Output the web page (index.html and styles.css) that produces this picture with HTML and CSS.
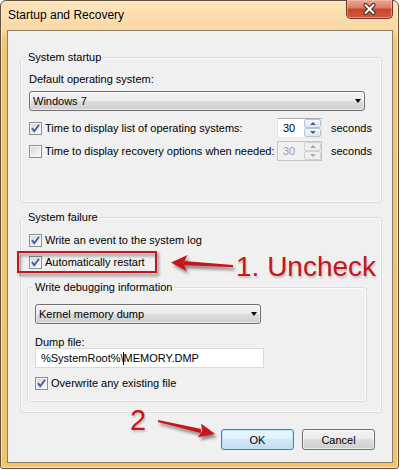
FILE: index.html
```html
<!DOCTYPE html>
<html lang="en">
<head>
    <meta charset="UTF-8">
    <title>Startup and Recovery</title>
    <link rel="stylesheet" href="styles.css">
</head>
<body>
    <div class="window">
        <div class="titlebar">
            <span class="title">Startup and Recovery</span>
            <button class="close" aria-label="Close">
                <svg width="13" height="12" viewBox="0 0 13 12">
                    <path d="M2.5 2 L10.5 10 M10.5 2 L2.5 10" stroke="#3b2a28" stroke-width="4" stroke-linecap="round"/>
                    <path d="M2.5 2 L10.5 10 M10.5 2 L2.5 10" stroke="#fff" stroke-width="2" stroke-linecap="round"/>
                </svg>
            </button>
        </div>
        <div class="client">
            <div class="group startup">
                <span class="group-title">System startup</span>
                <div class="label">Default operating system:</div>
                <div class="combo os"><span>Windows 7</span><i class="combo-arrow"></i></div>
                <div class="time-row first">
                    <label class="check"><span class="cb on"></span>Time to display list of operating systems:</label>
                    <div class="spin"><span class="spin-val">30</span><span class="spin-btns"><i class="up"></i><i class="down"></i></span></div>
                    <span class="unit">seconds</span>
                </div>
                <div class="time-row second">
                    <label class="check"><span class="cb"></span>Time to display recovery options when needed:</label>
                    <div class="spin disabled"><span class="spin-val">30</span><span class="spin-btns"><i class="up"></i><i class="down"></i></span></div>
                    <span class="unit">seconds</span>
                </div>
            </div>

            <div class="group failure">
                <span class="group-title">System failure</span>
                <label class="check row-log"><span class="cb on"></span>Write an event to the system log</label>
                <label class="check row-restart"><span class="cb on"></span>Automatically restart</label>
                <div class="group debug">
                    <span class="group-title">Write debugging information</span>
                    <div class="combo dump"><span>Kernel memory dump</span><i class="combo-arrow"></i></div>
                    <div class="label dump-label">Dump file:</div>
                    <div class="textbox">%SystemRoot%\<span class="caret"></span>MEMORY.DMP</div>
                    <label class="check row-overwrite"><span class="cb on"></span>Overwrite any existing file</label>
                </div>
            </div>

            <div class="buttons">
                <button class="btn default">OK</button>
                <button class="btn">Cancel</button>
            </div>
        </div>

        <div class="note note-one">1. Uncheck</div>
        <div class="note note-two">2</div>
        <svg class="marks" width="400" height="470" viewBox="0 0 400 470">
            <defs>
                <filter id="shade" x="-20%" y="-60%" width="150%" height="260%">
                    <feDropShadow dx="2" dy="3" stdDeviation="1.6" flood-color="#000" flood-opacity="0.45"/>
                </filter>
            </defs>
            <g fill="#c4161c" filter="url(#shade)">
                <rect x="18" y="252" width="138" height="20" fill="none" stroke="#c4161c" stroke-width="2"/>
                <polygon points="233,265 233,267.2 184,265.2 184,261"/>
                <polygon points="171,262.5 187.5,255 183.5,263.2 186.5,271"/>
                <polygon points="158.2,420 157.8,422 200.6,433 201.4,429"/>
                <polygon points="215,434 201,423.6 202.3,431.1 197.8,437.2"/>
            </g>
        </svg>
    </div>
</body>
</html>
```

FILE: styles.css
```css
* { margin: 0; padding: 0; box-sizing: border-box; }
body {
    font-family: 'Liberation Sans', Arial, sans-serif;
    font-size: 11px;
    color: #000;
    background: #fff;
}
.window {
    position: relative;
    width: 399px;
    height: 469px;
    display: flex;
    flex-direction: column;
    padding: 0 5px 5px 6px;
    border: 1px solid #5e523f;
    border-radius: 6px 6px 3px 3px;
    background: linear-gradient(180deg, #fce3bb 0, #f9d8a2 28px, #f4c477 40px, #f3c272 100%);
    box-shadow: inset 0 0 0 1px rgba(255, 240, 210, 0.7);
}
.titlebar {
    display: flex;
    align-items: flex-start;
    height: 29px;
    padding-left: 1px;
}
.title {
    margin-top: 7px;
    font-size: 12px;
    line-height: 15px;
    text-shadow: 0 0 6px rgba(255, 255, 255, 0.9);
}
.close {
    margin: -1px 0 0 auto;
    width: 47px;
    height: 19px;
    border: 1px solid #6b3a2c;
    border-top: 0;
    border-radius: 0 0 5px 5px;
    background: linear-gradient(180deg, #eaa996 0, #de7b62 45%, #c8432a 50%, #d4583c 100%);
    box-shadow: inset 0 0 0 1px rgba(255, 200, 180, 0.5);
    display: flex;
    align-items: center;
    justify-content: center;
}
.client {
    flex: 1;
    display: flex;
    flex-direction: column;
    padding: 26px 10px 0 12px;
    border: 1px solid #8a7d68;
    background: #f0f0f0;
}

/* group boxes */
.group {
    display: flex;
    flex-direction: column;
    align-items: flex-start;
    border: 1px solid #d5dfe5;
    border-radius: 3px;
    box-shadow: inset 0 0 0 1px #fafafa;
    padding: 0 8px;
}
.group-title {
    margin: -8px 0 0 -3px;
    padding: 0 2px;
    line-height: 15px;
    background: #f0f0f0;
}
.startup { padding-bottom: 41px; }
.failure { margin-top: 14px; padding-bottom: 10px; }
.debug {
    width: 340px;
    margin: 17px 0 0 -2px;
    padding: 0 7px 10px;
}
.debug .group-title { margin-left: -2px; }

.label { line-height: 15px; }
.startup .label { margin-top: 7px; }
.dump-label { line-height: 13px; margin-top: 12px; }

/* combo boxes */
.combo {
    display: flex;
    align-items: center;
    justify-content: space-between;
    height: 20px;
    padding: 0 3px 0 3px;
    border: 1px solid #707070;
    border-radius: 3px;
    background: linear-gradient(180deg, #f2f2f2 0, #ebebeb 50%, #dddddd 50%, #cfcfcf 100%);
    box-shadow: inset 0 0 0 1px rgba(255, 255, 255, 0.55);
}
.combo-arrow {
    width: 0;
    height: 0;
    border-left: 3.5px solid transparent;
    border-right: 3.5px solid transparent;
    border-top: 4px solid #000;
}
.os { width: 336px; margin-top: 4px; }
.dump { width: 226px; margin-top: 9px; }

/* check boxes */
.check {
    display: flex;
    align-items: center;
    gap: 3px;
    line-height: 15px;
}
.cb {
    width: 13px;
    height: 13px;
    flex: none;
    border: 1px solid #8e8f8f;
    background: linear-gradient(135deg, #d0d4da 0, #e9ebee 55%, #fbfbfb 100%);
    box-shadow: inset 0 0 0 1px #f4f4f4;
}
.cb.on {
    background:
        url("data:image/svg+xml,%3Csvg xmlns='http://www.w3.org/2000/svg' width='11' height='11'%3E%3Cpath d='M2 5.2 L4.3 8.2 L9 1.8' fill='none' stroke='%234a5f98' stroke-width='1.9'/%3E%3C/svg%3E") center / 11px 11px no-repeat,
        linear-gradient(135deg, #d0d4da 0, #e9ebee 55%, #fbfbfb 100%);
}
.row-log { margin-top: 8px; }
.row-restart { margin-top: 7px; }
.row-overwrite { margin-top: 8px; }

/* time rows */
.time-row {
    display: grid;
    grid-template-columns: 248px 45px auto;
    align-items: center;
    height: 20px;
}
.time-row.first { margin-top: 7px; }
.time-row.second { margin-top: 3px; }
.unit { padding-left: 9px; }

.spin {
    display: flex;
    width: 45px;
    height: 20px;
    border: 1px solid #abadb3;
    border-color: #abadb3 #dbdfe6 #e3e9ef #e2e3ea;
    background: #fff;
}
.spin-val { flex: 1; padding-left: 5px; line-height: 18px; }
.spin-btns { display: flex; flex-direction: column; width: 17px; }
.spin-btns i {
    flex: 1;
    display: flex;
    align-items: center;
    justify-content: center;
    border: 1px solid #b6c6d8;
    border-radius: 2px;
    background: linear-gradient(180deg, #f4f8fc, #dde7f2);
}
.spin-btns i::after {
    content: "";
    border-left: 3px solid transparent;
    border-right: 3px solid transparent;
}
.spin-btns .up::after { border-bottom: 3px solid #4d6185; }
.spin-btns .down::after { border-top: 3px solid #4d6185; }
.spin.disabled { background: #f0f0f0; border-color: #c6c6c6; color: #a0a0a0; }
.spin.disabled .spin-btns i { border-color: #d2d2d2; background: #f0f0f0; }
.spin.disabled .up::after { border-bottom-color: #a8a8a8; }
.spin.disabled .down::after { border-top-color: #a8a8a8; }

.textbox {
    width: 229px;
    height: 20px;
    margin-top: -1px;
    padding-left: 5px;
    line-height: 18px;
    border: 1px solid #dadada;
    background: #fff;
}
.caret {
    display: inline-block;
    width: 1px;
    height: 13px;
    margin-left: -1px;
    vertical-align: -3px;
    background: #000;
}

/* buttons */
.buttons {
    display: flex;
    justify-content: flex-end;
    gap: 8px;
    margin-top: 16px;
    padding-right: 7px;
}
.btn {
    width: 73px;
    height: 21px;
    font: inherit;
    color: #000;
    border: 1px solid #707070;
    border-radius: 3px;
    background: linear-gradient(180deg, #f2f2f2 0, #ebebeb 50%, #dddddd 50%, #cfcfcf 100%);
    box-shadow: inset 0 0 0 1px rgba(255, 255, 255, 0.6);
}
.btn.default {
    border-color: #3c7fb1;
    box-shadow: inset 0 0 0 1px #bde6fd;
    background: linear-gradient(180deg, #eaf6fd 0, #e0f0fb 50%, #cfe7f8 50%, #c3ddf2 100%);
}

/* annotations drawn over the dialog */
.note {
    position: absolute;
    color: #c4161c;
    font-family: 'Liberation Sans', Arial, sans-serif;
    font-size: 28px;
    line-height: 28px;
    text-shadow: 1px 2px 2px rgba(0, 0, 0, 0.2);
}
.note-one { left: 235px; top: 252px; }
.note-two { left: 129px; top: 405px; font-size: 29px; }
.marks {
    position: absolute;
    left: -1px;
    top: -1px;
    pointer-events: none;
}
```
